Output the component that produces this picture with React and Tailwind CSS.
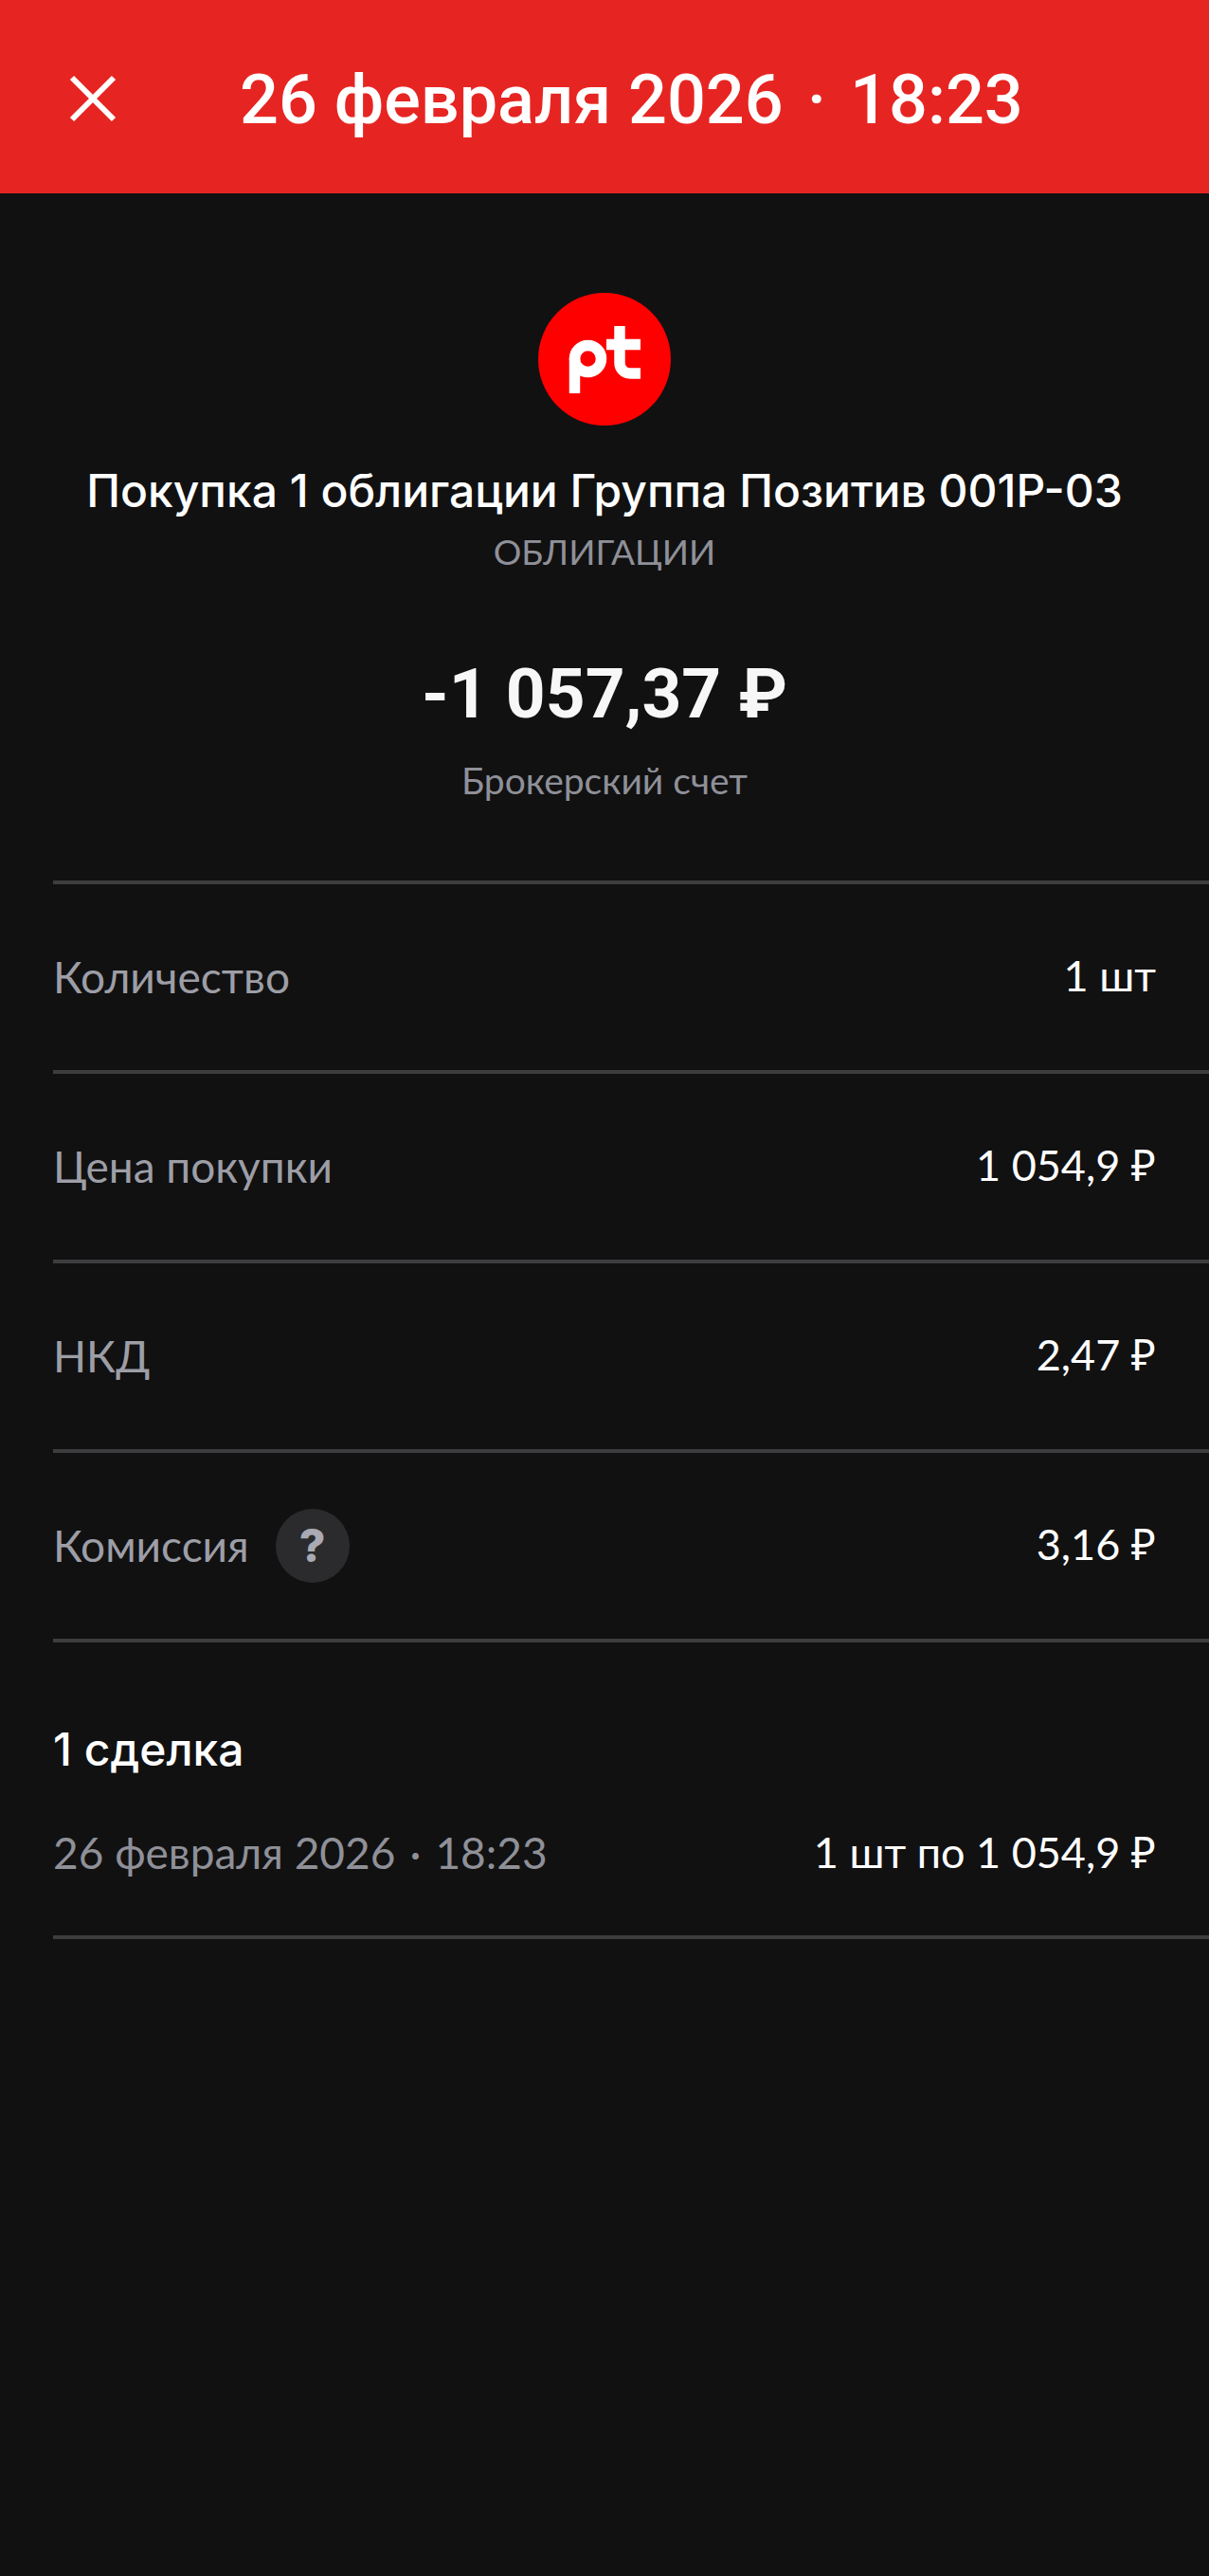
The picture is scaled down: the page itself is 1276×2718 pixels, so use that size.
const font = { fontFamily: 'Roboto, sans-serif' };
const body = { fontFamily: 'Lato, "Noto Sans", sans-serif' };
const title = { fontFamily: 'Inter, sans-serif' };

function Row({ label, value, help }) {
  return (
    <div className="h-[200px] pb-[2px] flex items-center justify-between pr-14 border-b-4 border-[#3d3d3f] box-border">
      <div className="flex items-center">
        <span className="text-[46px] text-[#9d9ea6]" style={body}>{label}</span>
        {help && (
          <span className="ml-7 mt-[1px] w-[78px] h-[78px] rounded-full bg-[#2b2b2d] flex items-center justify-center text-[48px] font-extrabold text-[#a9aab3]" style={title}>?</span>
        )}
      </div>
      <span className="text-[45px] text-white" style={body}>{value}</span>
    </div>
  );
}

export default function App() {
  return (
    <div className="w-[1276px] h-[2718px] bg-[#111112] overflow-hidden" style={font}>
      <header className="h-[204px] bg-[#e62522] flex items-center pl-[73px]">
        <svg width="50" height="50" viewBox="0 0 50 50" fill="none" stroke="white" strokeWidth="6" className="shrink-0 mt-[4px]">
          <path d="M3 3L47 47M47 3L3 47" />
        </svg>
        <div className="ml-[130px] pt-[7px] text-[72px] font-medium text-white whitespace-nowrap">
          26 февраля 2026<span className="mx-[25px]">·</span>18:23
        </div>
      </header>
      <section className="flex flex-col items-center pt-[105px]">
        <div className="w-[140px] h-[140px] rounded-full bg-[#fe0000]">
          <svg width="140" height="140" viewBox="0 0 140 140" fill="none" stroke="white" strokeWidth="11.5">
            <circle cx="52.5" cy="69.5" r="14" />
            <path d="M38.5 69V106" />
            <path d="M86 35V74a11 11 0 0 0 11 11h11M72 54.5h36" />
          </svg>
        </div>
        <div className="mt-[36px] text-[48px] font-medium leading-[66px] text-white whitespace-nowrap" style={title}>Покупка 1 облигации Группа Позитив 001Р-03</div>
        <div className="mt-[5px] text-[37px] leading-[52px] text-[#8f9098]" style={body}>ОБЛИГАЦИИ</div>
        <div className="mt-[79px] text-[73px] font-bold leading-[90px] text-[#f7f7f8]">-1 057,37 ₽</div>
        <div className="mt-[20px] text-[39px] leading-[52px] text-[#8f9098]" style={body}>Брокерский счет</div>
      </section>
      <section className="ml-14 mt-[80px] border-t-4 border-[#3d3d3f]">
        <Row label="Количество" value="1 шт" />
        <Row label="Цена покупки" value="1 054,9 ₽" />
        <Row label="НКД" value="2,47 ₽" />
        <Row label="Комиссия" value="3,16 ₽" help />
        <div className="pt-[78px] text-[48px] font-medium leading-[70px] text-white" style={title}>1 сделка</div>
        <div className="mt-[39px] pb-[53px] pr-14 flex items-center justify-between border-b-4 border-[#3d3d3f]">
          <span className="text-[46px] text-[#8f9098] whitespace-nowrap" style={body}>26 февраля 2026<span className="mx-[15px]">·</span>18:23</span>
          <span className="text-[45px] text-white" style={body}>1 шт по 1 054,9 ₽</span>
        </div>
      </section>
    </div>
  );
}
